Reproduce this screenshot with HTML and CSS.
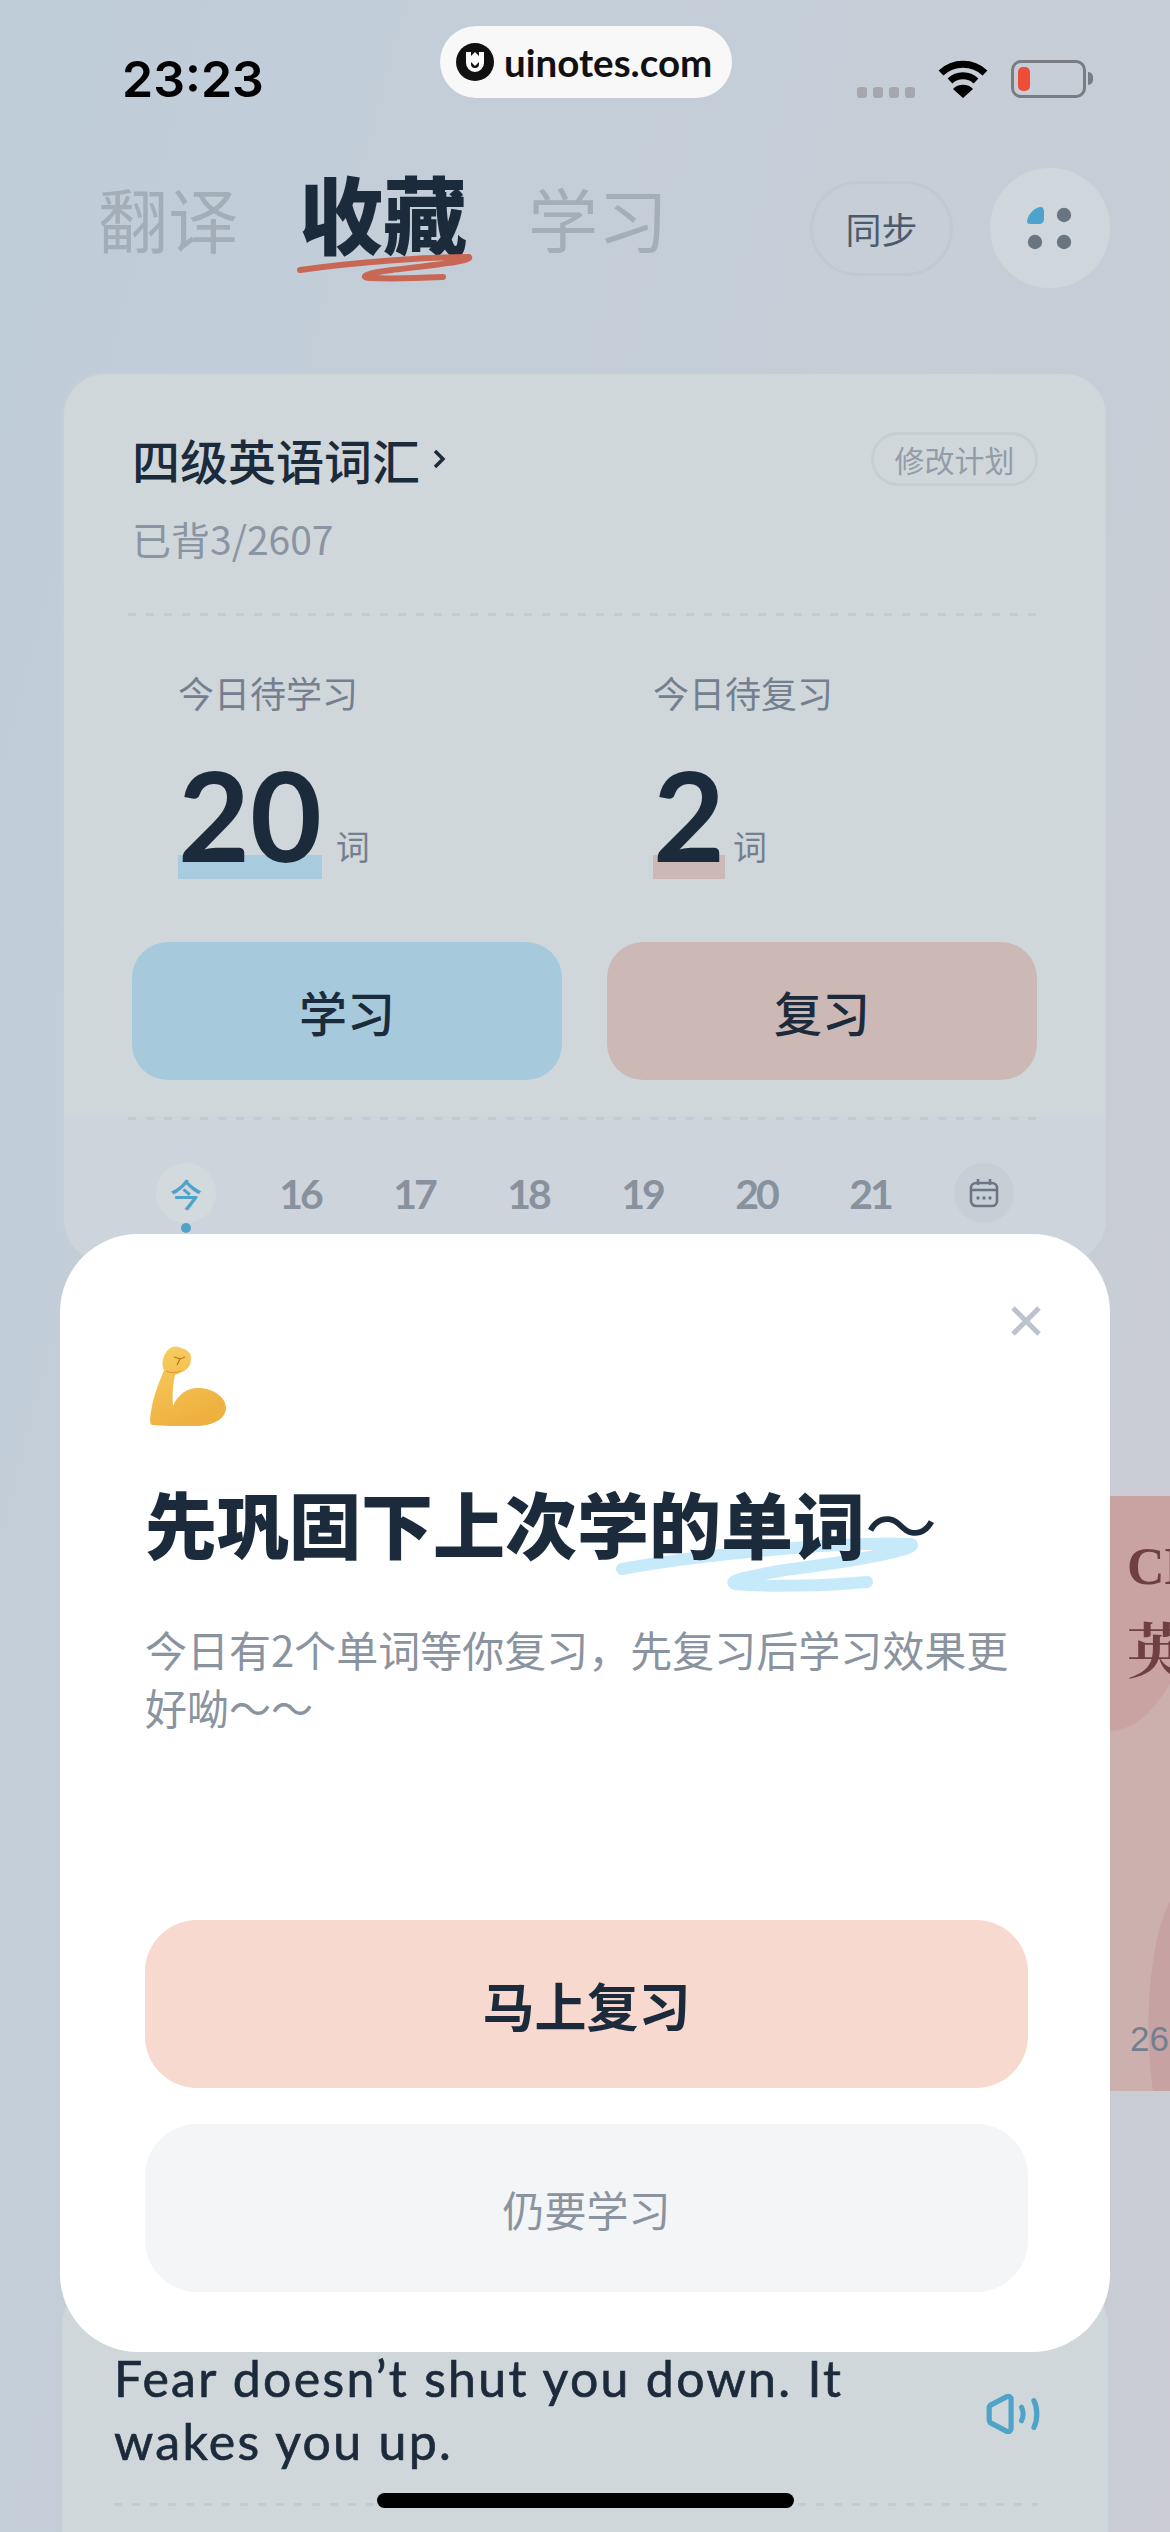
FILE: index.html
```html
<!DOCTYPE html>
<html lang="zh-CN">
<head>
    <meta charset="UTF-8">
    <meta name="viewport" content="width=device-width, initial-scale=1.0">
    <title>收藏</title>
    <link rel="stylesheet" href="styles.css">
</head>
<body>
    <div class="screen">
        <div class="status-bar">
            <span class="time">23:23</span>
            <div class="status-icons">
                <div class="signal"><i></i><i></i><i></i><i></i></div>
                <svg class="wifi" viewBox="0 0 50 38">
                    <path d="M3 13 A32 32 0 0 1 47 13" fill="none" stroke="#000" stroke-width="7"/>
                    <path d="M12 21 A19 19 0 0 1 38 21" fill="none" stroke="#000" stroke-width="7"/>
                    <path d="M25 38 L15 29 A14 14 0 0 1 35 29 Z" fill="#000"/>
                </svg>
                <div class="battery"><div class="battery-level"></div></div>
            </div>
        </div>
        <div class="watermark">
            <svg class="watermark-logo" viewBox="0 0 38 38">
                <circle cx="19" cy="19" r="19" fill="#111"/>
                <path d="M10 9 V20 A9 9 0 0 0 28 20 V9 L23 9 V13 L19 9 L15 13 V9 Z" fill="#fff"/>
                <path d="M15 19 L19 23 L23 19 V21 A4 4 0 0 1 15 21 Z" fill="#111"/>
            </svg>
            <span>uinotes.com</span>
        </div>

        <header class="top-nav">
            <nav class="tabs">
                <span class="tab">翻译</span>
                <span class="tab tab-active">收藏
                    <svg class="tab-scribble" viewBox="0 0 180 30">
                        <path d="M3 17 C60 9 130 4 172 4 C176 8 130 13 95 17 C70 20 62 24 72 25 C95 26 125 25 146 24" fill="none" stroke="#c96755" stroke-width="6" stroke-linecap="round" stroke-linejoin="round"/>
                    </svg>
                </span>
                <span class="tab">学习</span>
            </nav>
            <div class="nav-actions">
                <button class="sync-btn">同步</button>
                <button class="apps-btn">
                    <svg viewBox="0 0 48 44" width="48" height="44">
                        <path d="M1 15 C2 8 9 1 15 1 C17 1 18 3 18 6 L18 13 C18 16 16 18 13 18 L4 18 C2 18 1 17 1 15 Z" fill="#4ea3cc"/>
                        <circle cx="38" cy="9" r="7.2" fill="#697681"/>
                        <circle cx="9" cy="36" r="7.2" fill="#697681"/>
                        <circle cx="38" cy="36" r="7.2" fill="#697681"/>
                    </svg>
                </button>
            </div>
        </header>

        <section class="plan-card">
            <div class="plan-main">
                <div class="plan-head">
                    <div class="plan-title">四级英语词汇
                        <svg class="chevron" viewBox="0 0 14 20"><path d="M3 2 L11 10 L3 18" fill="none" stroke="#1c2b3c" stroke-width="3.5"/></svg>
                    </div>
                    <span class="edit-plan">修改计划</span>
                </div>
                <div class="plan-progress">已背3/2607</div>
                <div class="dots-line dots-line-head"></div>
                <div class="stats">
                    <div class="stat">
                        <div class="stat-label">今日待学习</div>
                        <div class="stat-value"><span class="num num-blue">20</span><span class="unit">词</span></div>
                    </div>
                    <div class="stat">
                        <div class="stat-label">今日待复习</div>
                        <div class="stat-value"><span class="num num-red">2</span><span class="unit">词</span></div>
                    </div>
                </div>
                <div class="plan-actions">
                    <button class="plan-btn plan-btn-blue">学习</button>
                    <button class="plan-btn plan-btn-red">复习</button>
                </div>
                <div class="dots-line dots-line-foot"></div>
            </div>
            <div class="week">
                <div class="day day-today"><span class="day-badge">今</span><i class="today-dot"></i></div>
                <div class="day">16</div>
                <div class="day">17</div>
                <div class="day">18</div>
                <div class="day">19</div>
                <div class="day">20</div>
                <div class="day">21</div>
                <div class="day">
                    <span class="day-badge day-badge-cal">
                        <svg viewBox="0 0 30 30" width="30" height="30">
                            <rect x="2" y="5" width="26" height="23" rx="5" fill="none" stroke="#6b7784" stroke-width="2.6"/>
                            <path d="M2 12 H28 M9 1 V7 M21 1 V7" fill="none" stroke="#6b7784" stroke-width="2.6"/>
                            <circle cx="9" cy="20" r="1.7" fill="#6b7784"/>
                            <circle cx="15" cy="20" r="1.7" fill="#6b7784"/>
                            <circle cx="21" cy="20" r="1.7" fill="#6b7784"/>
                        </svg>
                    </span>
                </div>
            </div>
        </section>

        <div class="book-row">
            <div class="book">
                <div class="book-title">CET-4</div>
                <div class="book-cn">英语</div>
                <div class="book-count">2607</div>
            </div>
        </div>

        <section class="quote-card">
            <div class="quote-row">
                <p class="quote">Fear doesn’t shut you down. It wakes you up.</p>
                <svg class="speaker" viewBox="0 0 56 42">
                    <path d="M4 12 L21 3 C24 2 26 3 26 6 L26 36 C26 39 24 40 21 39 L4 30 C3 29 3 28 3 27 L3 15 C3 14 3 13 4 12 Z" fill="none" stroke="#4fa3c9" stroke-width="5.5" stroke-linejoin="round"/>
                    <path d="M37 14 C39 18 39 24 37 28" fill="none" stroke="#4fa3c9" stroke-width="5.5" stroke-linecap="round"/>
                    <path d="M50 7 C54 15 54 27 50 35" fill="none" stroke="#4fa3c9" stroke-width="5.5" stroke-linecap="round"/>
                </svg>
            </div>
            <div class="dots-line"></div>
        </section>

        <div class="modal">
            <svg class="modal-close" viewBox="0 0 32 32"><path d="M3 3 L29 29 M29 3 L3 29" fill="none" stroke="#bcc3cd" stroke-width="5"/></svg>
            <svg class="muscle" viewBox="0 0 76 81">
                <defs>
                    <linearGradient id="armFill" x1="0" y1="0" x2="0.4" y2="1">
                        <stop offset="0" stop-color="#f9cf62"/>
                        <stop offset="1" stop-color="#eeb03f"/>
                    </linearGradient>
                </defs>
                <path d="M15 8 C18 2 24 -1 28 1 C36 3 41 6 41 12 C41 20 37 24 32 26 L25 29 C23 38 22 50 23 60 C28 48 38 41 50 42 C65 43 76 52 76 62 C76 73 62 81 42 80 C28 80 12 80 2 79 C-1 78 0 70 2 60 C5 45 11 32 14 24 C11 18 13 12 15 8 Z" fill="url(#armFill)"/>
                <path d="M24 11 L30 13 L27 19 M30 13 L35 11" fill="none" stroke="#b97a22" stroke-width="1.3"/>
                <path d="M16 25 C20 27 26 27 31 25" fill="none" stroke="#d89a35" stroke-width="1.3"/>
            </svg>
            <div class="modal-title-wrap">
                <svg class="title-scribble" viewBox="0 0 310 56">
                    <path d="M7 32 C90 17 230 4 296 7 C306 12 240 24 170 33 C135 39 112 44 120 47 C150 50 210 49 252 45" fill="none" stroke="#c6eafa" stroke-width="12" stroke-linecap="round" stroke-linejoin="round"/>
                </svg>
                <h2 class="modal-title">先巩固下上次学的单词<span class="tilde">～</span></h2>
            </div>
            <p class="modal-text">今日有2个单词等你复习，先复习后学习效果更好呦～～</p>
            <button class="modal-btn modal-btn-primary">马上复习</button>
            <button class="modal-btn modal-btn-plain">仍要学习</button>
        </div>

        <div class="home-bar"></div>
    </div>
</body>
</html>
```

FILE: styles.css
```css
* {
    box-sizing: border-box;
}
body {
    margin: 0;
    font-family: "Noto Sans CJK SC", "Noto Sans", sans-serif;
    color: #1c2b3c;
}
button {
    font-family: inherit;
    border: none;
    padding: 0;
}
.screen {
    position: relative;
    width: 1170px;
    height: 2532px;
    overflow: hidden;
    background: linear-gradient(105deg, #bfcdd9 0%, #c5ced8 45%, #cbccd3 100%);
}

/* Status bar */
.status-bar {
    display: flex;
    justify-content: space-between;
    align-items: flex-end;
    height: 98px;
    padding: 0 84px 0 122px;
}
.time {
    font-family: "Inter", sans-serif;
    font-size: 50px;
    font-weight: 600;
    line-height: 60px;
    color: #000;
    margin-bottom: -11px;
}
.status-icons {
    display: flex;
    align-items: flex-end;
}
.signal {
    display: flex;
    gap: 6px;
    margin-right: 23px;
}
.signal i {
    width: 10px;
    height: 11px;
    border-radius: 3px;
    background-color: #a5a7ac;
}
.wifi {
    width: 50px;
    height: 38px;
    margin-right: 23px;
}
.battery {
    position: relative;
    width: 75px;
    height: 38px;
    padding: 4px;
    border: 3px solid #7b7c82;
    border-radius: 10px;
}
.battery::after {
    content: "";
    position: absolute;
    right: -10px;
    top: 9px;
    width: 5px;
    height: 13px;
    border-radius: 0 6px 6px 0;
    background-color: #7b7c82;
}
.battery-level {
    width: 12px;
    height: 100%;
    border-radius: 5px;
    background-color: #ee4d38;
}
.watermark {
    position: absolute;
    left: 440px;
    top: 26px;
    display: flex;
    align-items: center;
    gap: 10px;
    width: 292px;
    height: 72px;
    padding-left: 16px;
    border-radius: 36px;
    background-color: #f8f8f8;
    font-family: "Lato", sans-serif;
    font-size: 38.5px;
    font-weight: 700;
    color: #111;
}
.watermark-logo {
    width: 38px;
    height: 38px;
}

/* Top tabs */
.top-nav {
    display: flex;
    justify-content: space-between;
    align-items: center;
    height: 120px;
    margin-top: 70px;
    padding: 0 60px 0 98px;
}
.tabs {
    display: flex;
    align-items: center;
    gap: 61px;
    margin-bottom: 20px;
}
.tab {
    font-size: 70px;
    line-height: 90px;
    color: #a3aeb9;
}
.tab-active {
    position: relative;
    font-size: 84px;
    font-weight: 900;
    color: #1c2b3c;
    margin-bottom: 12px;
}
.tab-scribble {
    position: absolute;
    left: -2px;
    top: 86px;
    width: 180px;
    height: 30px;
}
.nav-actions {
    display: flex;
    align-items: center;
    gap: 37px;
}
.sync-btn {
    width: 143px;
    height: 95px;
    border: 3px solid #c3c8cf;
    border-radius: 48px;
    background: none;
    font-size: 36px;
    color: #4c5b6b;
}
.apps-btn {
    display: flex;
    align-items: center;
    justify-content: center;
    width: 120px;
    height: 120px;
    border-radius: 50%;
    background-color: #d0d7dc;
}

/* Plan card */
.plan-card {
    width: 1046px;
    height: 892px;
    margin: 84px 0 0 62px;
    border-radius: 44px;
    overflow: hidden;
    background-color: #cdd4db;
    border: 2px solid #c6ced5;
}
.plan-main {
    height: 744px;
    margin: -2px -2px 0;
    padding: 60px 70px 0;
    background-color: #d0d7db;
}
.plan-head {
    display: flex;
    justify-content: space-between;
    align-items: center;
    height: 54px;
}
.plan-title {
    display: flex;
    align-items: center;
    font-size: 48px;
    font-weight: 500;
}
.chevron {
    width: 14px;
    height: 20px;
    margin-left: 12px;
}
.edit-plan {
    display: flex;
    align-items: center;
    justify-content: center;
    width: 167px;
    height: 54px;
    border: 3px solid #c6ced4;
    border-radius: 27px;
    font-size: 30px;
    color: #939ca7;
}
.plan-progress {
    margin-top: 27px;
    font-size: 39px;
    line-height: 50px;
    color: #8a95a3;
}
.dots-line {
    height: 3px;
    background-image: linear-gradient(90deg, #c3cbd1 8px, transparent 8px);
    background-size: 18px 3px;
}
.dots-line-head {
    margin: 50px 0 0 -4px;
}
.dots-line-foot {
    margin: 37px 0 0 -4px;
}
.stats {
    display: flex;
    margin-top: 54px;
    padding-left: 46px;
}
.stat {
    flex: none;
    width: 475px;
}
.stat-label {
    font-size: 36px;
    line-height: 44px;
    color: #74808f;
}
.stat-value {
    display: flex;
    align-items: flex-end;
    height: 148px;
    margin-top: 16px;
}
.num {
    display: block;
    position: relative;
    z-index: 0;
    font-family: "Lato", sans-serif;
    font-size: 124px;
    font-weight: 700;
    line-height: 124px;
    margin-bottom: 2px;
}
.num::after {
    content: "";
    position: absolute;
    z-index: -1;
    left: 0;
    right: 0;
    bottom: -3px;
    height: 24px;
}
.num-blue::after {
    background-color: #a8cbdd;
}
.num-red {
    margin-right: -6px;
}
.num-red::after {
    background-color: #ccb8b4;
}
.unit {
    margin: 0 0 10px 14px;
    font-size: 34px;
    line-height: 44px;
    color: #74808f;
}
.plan-actions {
    display: flex;
    gap: 45px;
    margin-top: 64px;
}
.plan-btn {
    width: 430px;
    height: 138px;
    border-radius: 36px;
    font-size: 48px;
    font-weight: 500;
    color: #1c2b3c;
}
.plan-btn-blue {
    background-color: #a6c9dc;
}
.plan-btn-red {
    background-color: #ccb9b5;
}

/* Week strip */
.week {
    display: flex;
    padding: 47px 0 0 65px;
}
.day {
    position: relative;
    display: flex;
    align-items: center;
    justify-content: center;
    width: 114px;
    height: 60px;
    font-family: "Lato", sans-serif;
    font-size: 41px;
    font-weight: 700;
    letter-spacing: -3px;
    color: #87929e;
}
.day-badge {
    display: flex;
    align-items: center;
    justify-content: center;
    width: 60px;
    height: 60px;
    border-radius: 50%;
    background-color: #d3dade;
}
.day-today {
    font-family: "Noto Sans CJK SC", sans-serif;
    font-size: 32px;
    font-weight: 500;
    letter-spacing: 0;
    color: #4fa3c9;
}
.day-badge-cal {
    background-color: #c6ced6;
}
.today-dot {
    position: absolute;
    left: 52px;
    top: 60px;
    width: 10px;
    height: 10px;
    border-radius: 50%;
    background-color: #4fa3c9;
}

/* Carousel peeking out on the right of the modal */
.book-row {
    display: flex;
    justify-content: flex-end;
    margin-top: 232px;
}
.book {
    width: 60px;
    height: 595px;
    padding: 43px 0 0 17px;
    overflow: hidden;
    background-color: #ccb0ad;
    background-image:
        radial-gradient(ellipse 100px 236px at 0 0, #c9a3a2 99%, transparent 100%),
        radial-gradient(ellipse 42px 144px at 80px 530px, #c6a3a2 98%, transparent 100%);
    color: #703f42;
    white-space: nowrap;
}
.book-title {
    font-family: "Liberation Serif", serif;
    font-size: 52px;
    font-weight: 700;
    line-height: 56px;
}
.book-cn {
    margin-top: 20px;
    font-family: "Noto Serif CJK SC", "Noto Sans CJK SC", serif;
    font-size: 60px;
    font-weight: 700;
    line-height: 64px;
}
.book-count {
    margin: 338px 0 0 3px;
    font-family: "Liberation Sans", sans-serif;
    font-size: 35px;
    line-height: 44px;
    color: #708090;
}

/* Sentence card under the modal */
.quote-card {
    width: 1046px;
    height: 300px;
    margin: 190px 0 0 62px;
    padding: 66px 70px 0 52px;
    border-radius: 44px 44px 0 0;
    background-color: #d0d7db;
}
.quote-row {
    display: flex;
    justify-content: space-between;
    align-items: center;
}
.quote {
    width: 780px;
    margin: 0;
    font-family: "Lato", sans-serif;
    font-size: 50px;
    font-weight: 400;
    line-height: 63px;
    letter-spacing: 2.3px;
    -webkit-text-stroke: 0.7px #1c2b3c;
    color: #1c2b3c;
}
.speaker {
    width: 54px;
    height: 40px;
    margin-top: 8px;
    margin-right: -2px;
}
.quote-card .dots-line {
    margin: 30px 0 0;
}

/* Modal */
.modal {
    position: absolute;
    left: 60px;
    top: 1234px;
    width: 1050px;
    height: 1118px;
    padding: 112px 82px 0 85px;
    border-radius: 78px;
    background-color: #fff;
}
.modal-close {
    position: absolute;
    right: 68px;
    top: 71px;
    width: 32px;
    height: 32px;
}
.muscle {
    display: block;
    width: 76px;
    height: 81px;
    margin-left: 5px;
}
.modal-title-wrap {
    position: relative;
    margin-top: 50px;
}
.title-scribble {
    position: absolute;
    left: 470px;
    top: 60px;
    width: 310px;
    height: 56px;
}
.modal-title {
    position: relative;
    margin: 0;
    font-size: 72px;
    font-weight: 900;
    line-height: 90px;
    color: #1c2b3c;
    white-space: nowrap;
}
.tilde {
    font-weight: 400;
}
.modal-text {
    width: 880px;
    margin: 53px 0 0;
    font-size: 42px;
    line-height: 58px;
    color: #8a94a0;
}
.modal-btn {
    display: block;
    width: 883px;
    height: 168px;
    border-radius: 52px;
}
.modal-btn-primary {
    margin-top: 184px;
    background-color: #f7d9cf;
    font-size: 52px;
    font-weight: 700;
    color: #1c2b3c;
}
.modal-btn-plain {
    margin-top: 36px;
    background-color: #f3f5f6;
    font-size: 42px;
    color: #8a94a0;
}

.home-bar {
    position: absolute;
    left: 377px;
    top: 2493px;
    width: 417px;
    height: 15px;
    border-radius: 8px;
    background-color: #000;
}
```
